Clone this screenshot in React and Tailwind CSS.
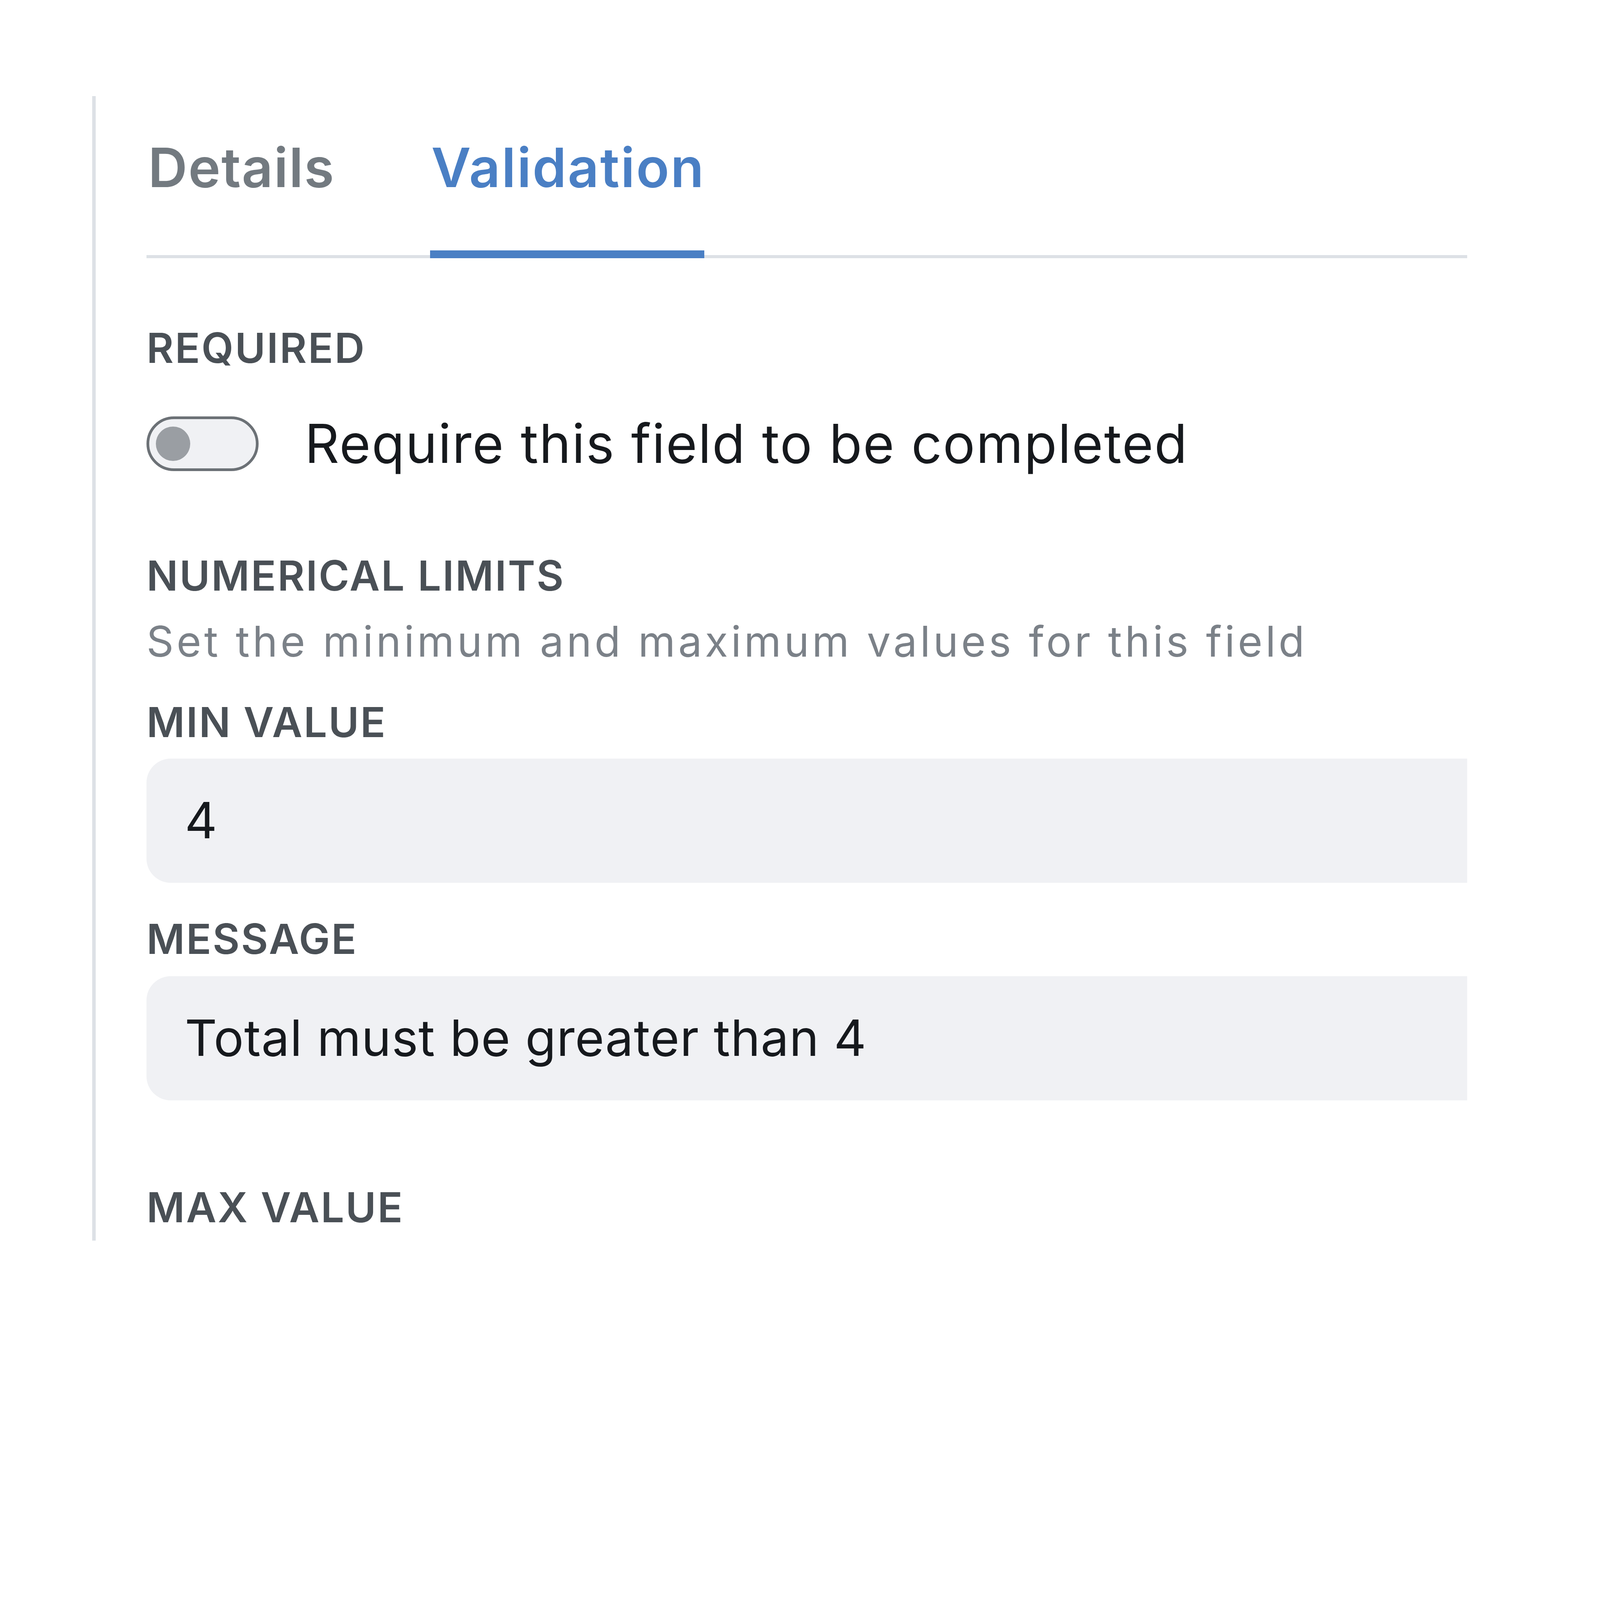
import React from "react";

function Label({ children, className = "" }) {
  return (
    <div
      className={
        "text-[106.5px] leading-none font-semibold uppercase tracking-[3.3px] text-[#4a5056] " +
        className
      }
    >
      {children}
    </div>
  );
}

function Field({ value, className = "" }) {
  return (
    <div
      className={
        "flex h-[318px] w-[calc(100%+150px)] items-center rounded-[62px] bg-[#f0f1f4] pl-[98px] " +
        className
      }
    >
      <span className="text-[128.5px] leading-none tracking-[1.1px] text-[#16191d]">{value}</span>
    </div>
  );
}

export default function App() {
  return (
    <div className="h-[3424px] w-[3980px] overflow-hidden bg-white font-['Inter',sans-serif]">
      <div className="ml-[236px] mt-[246px] h-[2930px] w-[3520px] overflow-hidden border-l-[9px] border-[#dde1e6] pl-[130px] pt-[113px]">
        <div className="flex w-full border-b-[8.5px] border-[#dde1e6]">
          <div className="-mb-[8.5px] w-[726px] border-b-[20px] border-transparent pb-[142.5px] pl-[4px] text-[139.5px] font-semibold leading-none tracking-[2.2px] text-[#737a80]">
            Details
          </div>
          <div className="-mb-[8.5px] w-[701.5px] border-b-[20px] border-[#4a7fc4] pb-[142.5px] pl-[3px] text-[139.5px] font-semibold leading-none tracking-[3.1px] text-[#4a7fc4]">
            Validation
          </div>
        </div>

        <Label className="mt-[177.5px]">Required</Label>

        <div className="mt-[121px] flex items-center gap-[118px]">
          <div className="flex h-[140.5px] w-[287px] items-center rounded-full border-[7.5px] border-[#6c7176] bg-[#f0f1f4] pl-[17px]">
            <div className="h-[87.5px] w-[87.5px] rounded-full bg-[#9a9ea3]" />
          </div>
          <span className="text-[137.5px] leading-none tracking-[2.4px] text-[#16191d]">
            Require this field to be completed
          </span>
        </div>

        <Label className="mt-[215px]">Numerical limits</Label>
        <div className="mt-[60.5px] text-[108.5px] leading-none tracking-[7.4px] text-[#7b8188]">
          Set the minimum and maximum values for this field
        </div>

        <Label className="mt-[99.5px]">Min value</Label>
        <Field value="4" className="mt-[39px]" />

        <Label className="mt-[91.5px]">Message</Label>
        <Field value="Total must be greater than 4" className="mt-[41px]" />

        <Label className="mt-[221.5px]">Max value</Label>
      </div>
    </div>
  );
}
